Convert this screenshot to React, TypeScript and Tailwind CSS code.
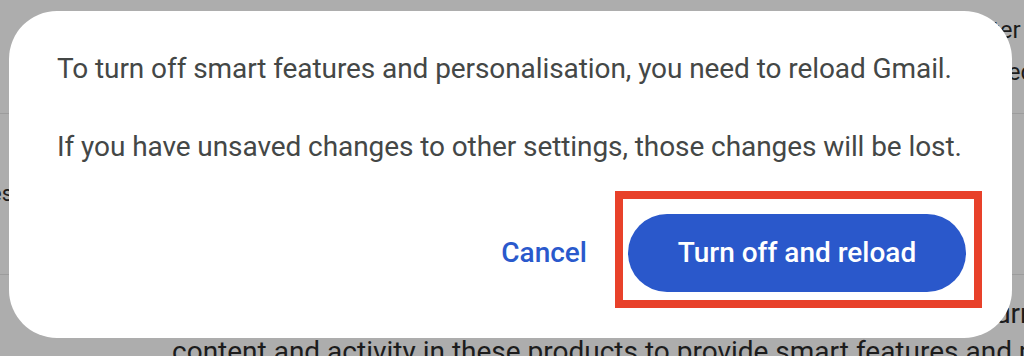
import React from "react";

export default function App() {
  return (
    <div className="relative w-[1024px] h-[356px] overflow-hidden bg-[#adadad] font-['Roboto',sans-serif]">
      {/* background page (under scrim) */}
      <div className="flex flex-col w-full h-full text-[#1c1c1c] text-[22px] leading-[28px]">
        <div className="h-[114px] shrink-0 border-b border-[#9c9c9c] flex">
          <div className="ml-[986px] pt-[16px] flex flex-col gap-[14px] whitespace-nowrap text-[24px]">
            <span>iter</span>
            <span className="ml-[9px]">eed</span>
          </div>
        </div>
        <div className="h-[161px] shrink-0 border-b border-[#9c9c9c] flex">
          <div className="ml-[-40px] pt-[66px] whitespace-nowrap">Filtes</div>
        </div>
        <div className="flex flex-col shrink-0 pt-[20px] text-[28px] leading-[38px]">
          <div className="ml-[986px] whitespace-nowrap">turn</div>
          <div className="ml-[172px] whitespace-nowrap">
            content and activity in these products to provide smart features and personalisation
          </div>
        </div>
      </div>

      {/* dialog */}
      <div className="absolute left-[9px] top-[11px] w-[1003px] h-[327px] bg-white rounded-[48px] pl-[48px] pr-[46px] pt-[40px] flex flex-col">
        <p className="text-[28px] leading-[36px] tracking-[-0.08px] text-[#444746] whitespace-nowrap">
          To turn off smart features and personalisation, you need to reload Gmail.
        </p>
        <p className="mt-[42px] text-[28px] leading-[36px] tracking-[-0.08px] text-[#444746] whitespace-nowrap">
          If you have unsaved changes to other settings, those changes will be lost.
        </p>
        <div className="mt-[49px] flex justify-end items-center gap-[41px]">
          <button className="h-[78px] flex items-center text-[28px] leading-[36px] font-medium text-[#2a59cc]">
            Cancel
          </button>
          <div className="relative">
            <button className="h-[78px] w-[338px] rounded-full bg-[#2a58cb] text-white text-[28px] leading-[36px] font-medium flex items-center justify-center">
              Turn off and reload
            </button>
            <div className="absolute left-[-13px] top-[-23px] right-[-16px] bottom-[-16px] border-[8px] border-[#e8412a]" />
          </div>
        </div>
      </div>
    </div>
  );
}
